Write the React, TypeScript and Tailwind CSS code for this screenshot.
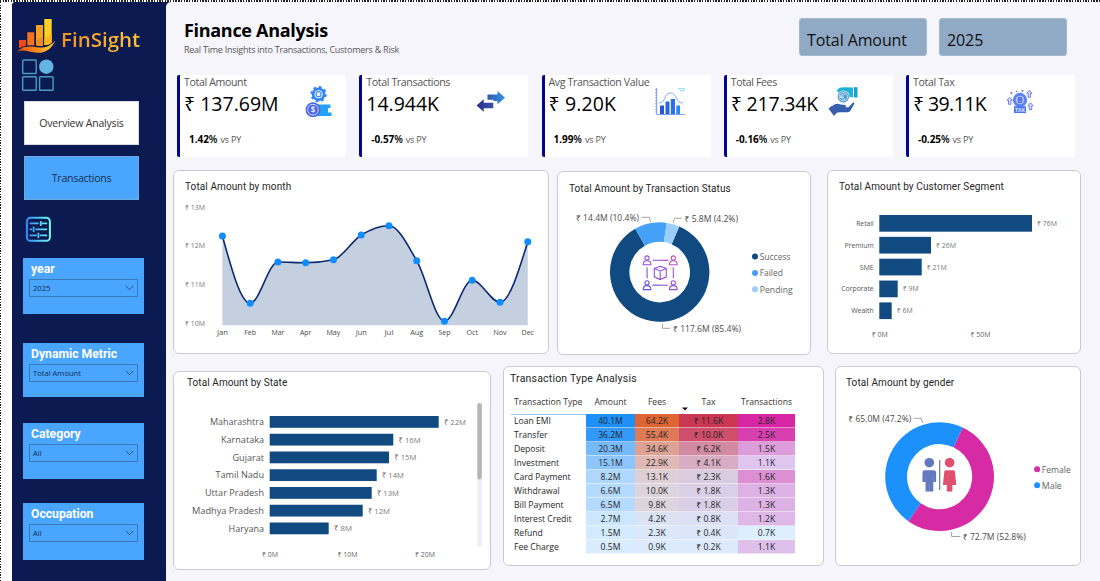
import type { ReactNode } from "react";

const UI = "'Open Sans', 'Noto Sans', sans-serif";

/* ---------- svg text ---------- */
type LabelProps = {
  x: number;
  y: number;
  w: number;
  size: number;
  fill?: string;
  children: string;
};

function Label({ x, y, w, size, fill = "#4a4a4a", children }: LabelProps) {
  return (
    <text
      x={x}
      y={y}
      textLength={w}
      lengthAdjust="spacingAndGlyphs"
      fontSize={size}
      fill={fill}
      fontFamily={UI}
    >
      {children}
    </text>
  );
}

/* ---------- sidebar ---------- */
function Logo() {
  return (
    <svg className="h-[36px] w-[40px] shrink-0" viewBox="16 18 40 36">
      <defs>
        <linearGradient id="lg1" x1="0" x2="1">
          <stop offset="0" stopColor="#f04a12" />
          <stop offset="0.5" stopColor="#f98a1b" />
          <stop offset="1" stopColor="#ffd62e" />
        </linearGradient>
      </defs>
      <rect x="19" y="40" width="7" height="8" fill="#ee4a16" />
      <rect x="27.3" y="32.3" width="7" height="14" fill="#f4731c" />
      <rect x="36" y="25" width="7" height="21" fill="#f9a11f" />
      <rect x="44.3" y="19" width="7.4" height="26" fill="#fdd023" />
      <path d="M44.3 38 L51.7 34 V45 H44.3 Z" fill="#f9b81f" />
      <path d="M36 40 L43 37 V46 H36 Z" fill="#f58c1c" />
      <path
        d="M17 51.5 C24 45.5 31 46 37 47.2 C44 48.4 50 46.5 55 41 C51 50.5 43 53.8 35 52.6 C28 51.5 23 49 17 51.5 Z"
        fill="url(#lg1)"
      />
      <path d="M18 49.6 C25 44.5 32 45.5 38 46.4 C44 47 49 46 54 41.5" fill="none" stroke="#0b1a50" strokeWidth="0.9" />
    </svg>
  );
}

function GridIcon() {
  return (
    <svg className="h-[34px] w-[34px]" viewBox="21 58 34 34" fill="none" stroke="#4a9bc0" strokeWidth="1.4">
      <rect x="22.7" y="60" width="13.5" height="13.5" rx="0.8" />
      <circle cx="46.3" cy="66.7" r="7.2" fill="#62b5e0" stroke="none" />
      <rect x="22.7" y="76.8" width="13.5" height="13.5" rx="0.8" />
      <rect x="39.6" y="76.8" width="13.5" height="13.5" rx="0.8" />
    </svg>
  );
}

function FilterIcon() {
  return (
    <svg className="h-[26px] w-[26px]" viewBox="25 216 26 26" fill="none">
      <defs>
        <linearGradient id="fg" gradientUnits="userSpaceOnUse" x1="26" y1="0" x2="50" y2="0">
          <stop offset="0" stopColor="#2d8cff" />
          <stop offset="1" stopColor="#72fbe8" />
        </linearGradient>
      </defs>
      <g stroke="url(#fg)" strokeWidth="2">
        <rect x="26.9" y="217.8" width="23" height="23" rx="3.6" />
        <path d="M29.5 223.4H38.600 M41.800 223.400H47 M40.800 220.900V226 M29.500 229.400H32 M35.400 229.410H47 M33.600 226.800V232 M29.500 235.400H36.800 M40 235.410H47 M38.400 232.800V238" strokeWidth="1.8" />
      </g>
    </svg>
  );
}

function Slicer({ title, value, className }: { title: string; value: string; className: string }) {
  return (
    <div className={`ml-[11px] w-[121px] bg-[#4aa5ff] pl-[6px] ${className}`}>
      <div className="h-[21px] whitespace-nowrap pl-[2px] pt-[3px] font-['Roboto',sans-serif] text-[12.2px] font-bold leading-[16px] text-white">
        {title}
      </div>
      <div className="flex h-[18px] w-[109px] items-center justify-between border border-[#3a78b8] pl-[3px] pr-[3px]">
        <span className="pt-[2px] font-['Open_Sans','Noto_Sans',sans-serif] text-[7.6px] leading-none text-[#123052]">{value}</span>
        <svg className="h-[6px] w-[9px]" viewBox="0 0 9 6" fill="none" stroke="#1f4c7d" strokeWidth="0.9">
          <path d="M0.7 0.9L4.5 4.7L8.3 0.9" />
        </svg>
      </div>
    </div>
  );
}

function Sidebar() {
  return (
    <aside className="flex w-[154px] shrink-0 flex-col rounded-tl-[4px] bg-[#0b1a50]">
      <div className="flex h-[56px] items-start pl-[4px] pt-[16px]">
        <Logo />
        <span className="ml-[5px] mt-[7px] whitespace-nowrap bg-gradient-to-r from-[#f5931f] to-[#fcc33a] bg-clip-text font-['Open_Sans','Noto_Sans',sans-serif] text-[20.5px] font-semibold leading-[28px] tracking-[0px] text-transparent">
          FinSight
        </span>
      </div>
      <div className="h-[34px] pl-[9px]">
        <GridIcon />
      </div>
      <button className="ml-[12px] mt-[9px] flex h-[44px] w-[115px] items-center justify-center border border-[#d9dbe4] bg-white pt-[2px] font-['Open_Sans','Noto_Sans',sans-serif] text-[10.5px] tracking-[-0.2px] text-[#333]">
        Overview Analysis
      </button>
      <button className="ml-[12px] mt-[11px] flex h-[44px] w-[115px] items-center justify-center border border-[#6fa9dd] bg-[#4aa5ff] pt-[2px] font-['Open_Sans','Noto_Sans',sans-serif] text-[10.5px] tracking-[-0.25px] text-[#14304f]">
        Transactions
      </button>
      <div className="mt-[16px] h-[26px] pl-[13px]">
        <FilterIcon />
      </div>
      <Slicer title="year" value="2025" className="mt-[16px] h-[56px]" />
      <Slicer title="Dynamic Metric" value="Total Amount" className="mt-[28.5px] h-[54px]" />
      <Slicer title="Category" value="All" className="mt-[26px] h-[56px]" />
      <Slicer title="Occupation" value="All" className="mt-[24.5px] h-[57px]" />
    </aside>
  );
}

/* ---------- KPI icons ---------- */
const iconBlue = "#2f86fa";

function GearCoinIcon() {
  return (
    <svg className="h-[34px] w-[30px]" viewBox="304 85 30 34">
      <circle cx="318.6" cy="94.2" r="5.4" fill="none" stroke={iconBlue} strokeWidth="2.800" />
      <circle cx="318.6" cy="94.2" r="7.2" fill="none" stroke={iconBlue} strokeWidth="1.800" strokeDasharray="2.83 2.83" />
      <circle cx="318.6" cy="94.2" r="2.500" fill="none" stroke="#3f8cf8" strokeWidth="1.200" />
      <path d="M317 104.500H330.500V108H328V112.500H331.500V116H317Z" fill="#22a1fb" />
      <circle cx="313" cy="109.700" r="7.400" fill="#4b63e8" />
      <circle cx="313" cy="109.700" r="5.400" fill="none" stroke="#dfe6ff" strokeWidth="0.900" />
      <text x="313" y="112.700" textAnchor="middle" fontSize="8" fontWeight="700" fill="#e6ecff" fontFamily={UI}>
        $
      </text>
    </svg>
  );
}

function ArrowsIcon() {
  return (
    <svg className="h-[22px] w-[30px]" viewBox="476 90 30 22">
      <defs>
        <linearGradient id="ar1" x1="0" x2="1">
          <stop offset="0" stopColor="#3357a8" />
          <stop offset="1" stopColor="#2f93ea" />
        </linearGradient>
        <linearGradient id="ar2" x1="0" x2="1">
          <stop offset="0" stopColor="#23318d" />
          <stop offset="1" stopColor="#3b51ac" />
        </linearGradient>
      </defs>
      <path d="M487.500 94.500H497.500V91L505 97.700L497.500 104.200V101H493.500V99.800H487.500Z" fill="url(#ar1)" />
      <path d="M493.300 102.700H483.700V99.300L476.500 105.500L483.700 111.700V108.300H493.300Z" fill="url(#ar2)" />
    </svg>
  );
}

function HistogramIcon() {
  return (
    <svg className="h-[29px] w-[32px]" viewBox="653 87 32 29">
      <path d="M655.700 88V114.500H684" fill="none" stroke="#5a8cf0" strokeWidth="0.800" />
      <path d="M655 89V114" stroke="#4573e0" strokeWidth="1" strokeDasharray="1.200 1.600" />
      <path d="M658 103C665 103.500 662.500 93 669.500 93S674 103.500 682 103" fill="none" stroke="#6f9cf5" strokeWidth="0.900" />
      <path d="M659 114V105.500H663V114Z" fill="#2456d8" />
      <path d="M664.500 114V101.500H668.500V114Z" fill="#2a62df" />
      <path d="M669.800 114V99H674V114Z" fill="#2a70ea" />
      <path d="M675.300 114V105.500H679V114Z" fill="#2b84f2" />
      <path d="M677 88.700H684M679 90.700H684" stroke="#6fd0f5" strokeWidth="0.800" />
    </svg>
  );
}

function HandsIcon() {
  return (
    <svg className="h-[31px] w-[32px]" viewBox="827 86 32 31">
      <path d="M837 90C839 87.500 842 87 845 87.300L853 87.500V97.200H847C844 97.200 841 95 838 93Z" fill="#1fb2d8" />
      <path d="M854 87.200H857.500V97.500H854Z" fill="#1a9fd0" />
      <circle cx="843.300" cy="96.700" r="6.300" fill="#fff" />
      <circle cx="843.300" cy="96.700" r="5.700" fill="#4a98cc" />
      <circle cx="843.300" cy="96.700" r="4.100" fill="none" stroke="#e6f6ff" strokeWidth="0.800" />
      <path d="M845.300 94.700A2.600 2.600 0 1 0 845.300 98.700M840 96.100H844M840 97.500H844" fill="none" stroke="#f2fbff" strokeWidth="0.700" />
      <path d="M832.500 106C835 103.200 838 103.200 840.500 104.500L845 105C846.500 105.300 846.300 107.300 845 107.300L848.500 107.200L852.800 102.800C853.800 102 854.800 103 854.200 104L850.500 110.500C849.500 112 848 112.300 846.500 112.300H840L836 112.800Z" fill="#345fae" />
      <path d="M828.500 108.500L832.300 105.500L837 112.500L834 116Z" fill="#3c5ca6" />
    </svg>
  );
}

function TaxIcon() {
  return (
    <svg className="h-[27px] w-[28px]" viewBox="1006 88 28 27">
      <circle cx="1020" cy="100" r="7.200" fill="#6487f4" />
      <circle cx="1020" cy="100" r="5" fill="#a9c0fb" stroke="#4c6ff0" strokeWidth="1" />
      <text x="1020" y="102.900" textAnchor="middle" fontSize="8" fontWeight="700" fill="#3f5fe6" fontFamily={UI}>
        B
      </text>
      <rect x="1014" y="106.300" width="12" height="6.700" rx="0.600" fill="#4a74f2" />
      <text x="1020" y="111.700" textAnchor="middle" fontSize="5.200" fontWeight="700" fill="#e4ecff" fontFamily={UI}>
        TAX
      </text>
      <g fill="#dfe6ff" stroke="#6070ee" strokeWidth="0.900">
        <path d="M1009.700 97.300L1012.300 100.300H1010.900V104.300H1008.500V100.300H1007.100Z" />
        <path d="M1029.300 90.300L1031.900 93.300H1030.500V97.300H1028.100V93.300H1026.700Z" />
        <path d="M1030.500 102.800L1033.100 105.800H1031.700V109.600H1029.300V105.800H1027.900Z" />
      </g>
      <g fill="#5f6ff0">
        <circle cx="1011.500" cy="93" r="1" />
        <circle cx="1016.500" cy="91.500" r="0.800" />
        <circle cx="1022.500" cy="91" r="1" />
      </g>
    </svg>
  );
}

function Kpi({
  title,
  value,
  delta,
  valueCls,
  iconCls,
  icon,
}: {
  title: string;
  value: string;
  delta: string;
  valueCls: string;
  iconCls: string;
  icon: ReactNode;
}) {
  return (
    <div className="relative h-[82px] w-[169px] rounded-[2px] border-l-[3px] border-[#04048c] bg-white pl-[4px] font-['Open_Sans','Noto_Sans',sans-serif]">
      <div className="h-[14px] whitespace-nowrap text-[10.6px] leading-[14px] tracking-[-0.36px] text-[#555]">{title}</div>
      <div className={`whitespace-nowrap pt-[3px] text-[19.5px] leading-[24px] text-black ${valueCls}`}>{value}</div>
      <div className="mt-[15px] whitespace-nowrap pl-[5px] text-[9px] leading-[16px] tracking-[-0.2px] text-[#555]">
        <span className="text-[10px] font-bold tracking-[-0.05px] text-black">{delta}</span>
        <span className="mr-px text-[10px] font-semibold text-black">%</span> vs PY
      </div>
      <div className={`absolute ${iconCls}`}>{icon}</div>
    </div>
  );
}

/* ---------- cards ---------- */
function Card({
  title,
  className,
  titleCls,
  children,
}: {
  title: string;
  className: string;
  titleCls: string;
  children: ReactNode;
}) {
  return (
    <section className={`flex shrink-0 flex-col overflow-hidden rounded-[6px] border border-[#cbc9d4] bg-white ${className}`}>
      <h2 className={`whitespace-nowrap font-['Roboto',sans-serif] leading-[14px] text-[#252525] ${titleCls}`}>{title}</h2>
      {children}
    </section>
  );
}

const months = ["Jan", "Feb", "Mar", "Apr", "May", "Jun", "Jul", "Aug", "Sep", "Oct", "Nov", "Dec"];
const monthW = [11, 12, 13, 11.5, 14, 11, 9, 13, 12, 11.5, 13.5, 12.5];
const monthY = [236, 303.3, 262, 262.7, 259.7, 235, 225.7, 260.7, 321.3, 280.3, 302.3, 241.7];
const step = 27.76;
const monthX = monthY.map((_, i) => 222.4 + i * step);

function monotonePath(xs: number[], ys: number[]) {
  const n = xs.length;
  const s = ys.slice(1).map((y, i) => (y - ys[i]) / (xs[i + 1] - xs[i]));
  const m: number[] = new Array(n).fill(0);
  for (let i = 1; i < n - 1; i++) {
    const p = (s[i - 1] + s[i]) / 2;
    m[i] =
      (Math.sign(s[i - 1]) + Math.sign(s[i])) *
      Math.min(Math.abs(s[i - 1]), Math.abs(s[i]), 0.5 * Math.abs(p));
  }
  m[0] = (3 * s[0] - m[1]) / 2;
  m[n - 1] = (3 * s[n - 2] - m[n - 2]) / 2;
  let d = `M${xs[0]},${ys[0]}`;
  for (let i = 0; i < n - 1; i++) {
    const h = (xs[i + 1] - xs[i]) / 3;
    d += `C${xs[i] + h},${ys[i] + m[i] * h} ${xs[i + 1] - h},${ys[i + 1] - m[i + 1] * h} ${xs[i + 1]},${ys[i + 1]}`;
  }
  return d;
}

function MonthChart() {
  const line = monotonePath(monthX, monthY);
  return (
    <svg className="h-[150px] w-[373px]" viewBox="174 200 373 150">
      <path d={`${line}V325.300H${monthX[0]}Z`} fill="#c4d0e0" />
      <path d={line} fill="none" stroke="#0b2a70" strokeWidth="1.600" />
      {monthX.map((x, i) => (
        <circle key={i} cx={x} cy={monthY[i]} r="3.500" fill="#118dff" />
      ))}
      {["₹ 13M", "₹ 12M", "₹ 11M", "₹ 10M"].map((t, i) => (
        <Label key={t} x={185} y={209.8 + i * 38.6} w={20} size={7} fill="#777">
          {t}
        </Label>
      ))}
      {months.map((t, i) => (
        <Label key={t} x={monthX[i] - monthW[i] / 2} y={335.2} w={monthW[i]} size={7}>
          {t}
        </Label>
      ))}
    </svg>
  );
}

function arc(cx: number, cy: number, R: number, r: number, a: number, b: number) {
  const pt = (rad: number, deg: number) => {
    const t = (deg * Math.PI) / 180;
    return `${cx + rad * Math.sin(t)},${cy - rad * Math.cos(t)}`;
  };
  const big = b - a > 180 ? 1 : 0;
  return `M${pt(R, a)}A${R},${R} 0 ${big} 1 ${pt(R, b)}L${pt(r, b)}A${r},${r} 0 ${big} 0 ${pt(r, a)}Z`;
}

function Person({ x, y }: { x: number; y: number }) {
  return (
    <g>
      <circle cx={x} cy={y - 2.3} r="2.1" />
      <path d={`M${x - 3.8} ${y + 4.5}V${y + 3.5}Q${x - 3.5} ${y + 0.5} ${x} ${y + 0.5}T${x + 3.8} ${y + 3.5}V${y + 4.5}Z`} />
    </g>
  );
}

function StatusChart() {
  return (
    <svg className="h-[150px] w-[252px]" viewBox="558 201.2 252 150">
      <defs>
        <linearGradient id="net" gradientUnits="userSpaceOnUse" x1="643" y1="290" x2="678" y2="255">
          <stop offset="0" stopColor="#5a55dd" />
          <stop offset="0.5" stopColor="#9a50d8" />
          <stop offset="1" stopColor="#cf4fc0" />
        </linearGradient>
      </defs>
      <path d={arc(659.7, 272.3, 49.7, 30.3, 23.2, 330.6)} fill="#114a80" />
      <path d={arc(659.7, 272.3, 49.7, 30.3, -29.4, 8)} fill="#45a1f8" />
      <path d={arc(659.7, 272.3, 49.7, 30.3, 8, 23.2)} fill="#9bcefb" />
      <g fill="none" stroke="#999" strokeWidth="0.9">
        <path d="M642 217.500H649.500L650.500 222.500" />
        <path d="M681.500 218.500H674.500L673 223" />
        <path d="M662.500 324V328.500H670" />
      </g>
      <g fill="none" stroke="url(#net)" strokeWidth="1.1">
        <Person x={647} y={260.5} />
        <Person x={673.3} y={260.5} />
        <Person x={647} y={285.3} />
        <Person x={673.3} y={285.3} />
        <path d="M652.500 260.400L668 260.600M652.500 285.300L668 285.500M647 267.500L647.200 278.500M673.200 267.500L673.400 278.500" />
        <path d="M660.200 266.500L666.300 268.700V277L660.200 279.800L654.300 277V268.700ZM654.300 268.700L660.200 271.200L666.300 268.700M660.200 271.200V279.800" />
      </g>
      <Label x={576} y={221} w={63} size={8.6}>₹ 14.4M (10.4%)</Label>
      <Label x={684.5} y={222.3} w={53.5} size={8.6}>₹ 5.8M (4.2%)</Label>
      <Label x={673} y={332.3} w={68} size={8.6}>₹ 117.6M (85.4%)</Label>
      <circle cx="755" cy="256.700" r="3" fill="#114a80" />
      <circle cx="755" cy="273.200" r="3" fill="#45a1f8" />
      <circle cx="755" cy="289.500" r="3" fill="#9bcefb" />
      <Label x={759.7} y={260} w={30.8} size={9} fill="#666">Success</Label>
      <Label x={759.7} y={276.5} w={23.2} size={9} fill="#666">Failed</Label>
      <Label x={759.7} y={292.8} w={33} size={9} fill="#666">Pending</Label>
    </svg>
  );
}

const segments = [
  { n: "Retail", w: 17.5, end: 1032, v: "₹ 76M" },
  { n: "Premium", w: 29, end: 931, v: "₹ 26M" },
  { n: "SME", w: 14, end: 921.7, v: "₹ 21M" },
  { n: "Corporate", w: 32.5, end: 897.7, v: "₹ 9M" },
  { n: "Wealth", w: 22.5, end: 891.7, v: "₹ 6M" },
];

function SegmentChart() {
  return (
    <svg className="h-[150px] w-[252px]" viewBox="828 200 252 150">
      {segments.map((s, i) => {
        const y = 215 + i * 21.85;
        return (
          <g key={s.n}>
            <rect x="879.3" y={y} width={s.end - 879.3} height="16.7" fill="#114a80" />
            <Label x={873.7 - s.w} y={y + 10.8} w={s.w} size={7} fill="#555">{s.n}</Label>
            <Label x={s.end + 5} y={y + 10.8} w={i < 3 ? 20 : 16} size={7} fill="#777">{s.v}</Label>
          </g>
        );
      })}
      <Label x={871.8} y={337.2} w={16} size={7} fill="#666">₹ 0M</Label>
      <Label x={970.5} y={337.2} w={20} size={7} fill="#666">₹ 50M</Label>
    </svg>
  );
}

const states = [
  { n: "Maharashtra", w: 54, end: 438.7, v: "₹ 22M" },
  { n: "Karnataka", w: 43, end: 393.3, v: "₹ 16M" },
  { n: "Gujarat", w: 31.5, end: 389, v: "₹ 15M" },
  { n: "Tamil Nadu", w: 48.5, end: 376.7, v: "₹ 14M" },
  { n: "Uttar Pradesh", w: 59, end: 371.7, v: "₹ 13M" },
  { n: "Madhya Pradesh", w: 72, end: 362.7, v: "₹ 12M" },
  { n: "Haryana", w: 35.5, end: 328.7, v: "₹ 8M" },
];

function StateChart() {
  return (
    <svg className="h-[166px] w-[315px]" viewBox="174 398 315 166">
      {states.map((s, i) => {
        const y = 416 + i * 17.75;
        return (
          <g key={s.n}>
            <rect x="269.7" y={y} width={s.end - 269.7} height="11.8" fill="#114a80" />
            <Label x={264 - s.w} y={y + 9.2} w={s.w} size={9.4} fill="#555">{s.n}</Label>
            <Label x={s.end + 5.3} y={y + 8.8} w={i < 6 ? 22 : 18} size={7.8} fill="#777">{s.v}</Label>
          </g>
        );
      })}
      <rect x="477.3" y="403" width="4.5" height="144" rx="2" fill="#efeff1" />
      <rect x="477.3" y="403" width="4.5" height="76.5" rx="2.2" fill="#b5b5b8" />
      <Label x={262} y={557} w={16} size={7} fill="#666">₹ 0M</Label>
      <Label x={337.5} y={557} w={20} size={7} fill="#666">₹ 10M</Label>
      <Label x={415} y={557} w={20} size={7} fill="#666">₹ 20M</Label>
    </svg>
  );
}

const rows: string[][] = [
  ["Loan EMI", "40.1M", "64.2K", "₹ 11.6K", "2.8K"],
  ["Transfer", "36.2M", "55.4K", "₹ 10.0K", "2.5K"],
  ["Deposit", "20.3M", "34.6K", "₹ 6.2K", "1.5K"],
  ["Investment", "15.1M", "22.9K", "₹ 4.1K", "1.1K"],
  ["Card Payment", "8.2M", "13.1K", "₹ 2.3K", "1.6K"],
  ["Withdrawal", "6.6M", "10.0K", "₹ 1.8K", "1.3K"],
  ["Bill Payment", "6.5M", "9.8K", "₹ 1.8K", "1.3K"],
  ["Interest Credit", "2.7M", "4.2K", "₹ 0.8K", "1.2K"],
  ["Refund", "1.5M", "2.3K", "₹ 0.4K", "0.7K"],
  ["Fee Charge", "0.5M", "0.9K", "₹ 0.2K", "1.1K"],
];
const heat: string[][] = [
  ["bg-[#1e90fc]", "bg-[#df6534]", "bg-[#cb3653]", "bg-[#d626a3]"],
  ["bg-[#3399fb]", "bg-[#de7a57]", "bg-[#cf4e6b]", "bg-[#d840b0]"],
  ["bg-[#77bafc]", "bg-[#dda294]", "bg-[#d28aa3]", "bg-[#dd9cda]"],
  ["bg-[#8cc6fd]", "bg-[#dfb9b5]", "bg-[#d7adc3]", "bg-[#dec6ef]"],
  ["bg-[#b0d8ff]", "bg-[#decfd6]", "bg-[#d9cce0]", "bg-[#dd8fd4]"],
  ["bg-[#b5daff]", "bg-[#ded4dd]", "bg-[#dacfe6]", "bg-[#ddb3e5]"],
  ["bg-[#b5daff]", "bg-[#ded4dd]", "bg-[#dacfe6]", "bg-[#ddb3e5]"],
  ["bg-[#cde6ff]", "bg-[#dbe2f2]", "bg-[#dbe0f5]", "bg-[#deb9e8]"],
  ["bg-[#d4eaff]", "bg-[#dbe7fa]", "bg-[#dce6fb]", "bg-[#dceeff]"],
  ["bg-[#d9ecff]", "bg-[#dceafd]", "bg-[#dceafe]", "bg-[#dec0eb]"],
];

function TypeTable() {
  return (
    <div className="ml-[7px] mt-[6px] w-[285px] font-['Open_Sans','Noto_Sans',sans-serif]">
      <div className="grid h-[21.5px] grid-cols-[75px_49px_44px_59px_57px] items-center text-center text-[8.6px] text-[#333]">
        <span className="whitespace-nowrap pl-[3px] text-left">Transaction Type</span>
        <span>Amount</span>
        <span>Fees</span>
        <span className="relative">
          Tax
          <svg className="absolute left-[3px] top-[11px] h-[4px] w-[6px]" viewBox="0 0 6 4">
            <path d="M0 0.500H6L3 3.500Z" fill="#111" />
          </svg>
        </span>
        <span>Transactions</span>
      </div>
      {rows.map((r, i) => (
        <div
          key={r[0]}
          className="grid h-[14.1px] grid-cols-[75px_49px_44px_59px_57px] text-center text-[8.6px] leading-[15px] text-[#262626]"
        >
          <span className={`whitespace-nowrap pl-[3px] text-left ${i === 0 ? "border-t border-[#8fc7f5] leading-[13px]" : ""}`}>{r[0]}</span>
          {r.slice(1).map((c, j) => (
            <span key={j} className={`h-[14.1px] border-b border-white/50 ${heat[i][j]}`}>{c}</span>
          ))}
        </div>
      ))}
    </div>
  );
}

function GenderChart() {
  return (
    <svg className="h-[164px] w-[244px]" viewBox="835.7 396 244 164">
      <path d={arc(939.3, 476.7, 54.4, 32.6, 25.1, 215.2)} fill="#d62ba5" />
      <path d={arc(939.3, 476.7, 54.4, 32.6, 215.2, 385.1)} fill="#1c90fb" />
      <g fill="none" stroke="#999" strokeWidth="0.9">
        <path d="M913.500 418.300H921L922.500 423" />
        <path d="M951.300 532V536.500H960" />
      </g>
      <circle cx="929" cy="462.700" r="4.800" fill="#6478c0" />
      <path d="M924.500 470.300H933.500Q935.800 470.300 935.800 472.500V482H933V491.500H925.200V482H922.200V472.500Q922.200 470.300 924.500 470.300Z" fill="#6478c0" />
      <path d="M925.600 475V482M932.800 475V482M929 484V491.500" stroke="#8a99d4" strokeWidth="0.5" />
      <path d="M939.400 460V490" stroke="#5c7a94" strokeWidth="1.200" />
      <circle cx="949.300" cy="462.700" r="4.800" fill="#e0506e" />
      <path d="M945.500 470.300H953Q954.300 470.300 954.600 471.600L956 485H952V491.500H946.500V485H942.600L944 471.600Q944.300 470.300 945.500 470.300Z" fill="#e0506e" />
      <Label x={848} y={422.3} w={63} size={8.6}>₹ 65.0M (47.2%)</Label>
      <Label x={962.5} y={540.3} w={63} size={8.6}>₹ 72.7M (52.8%)</Label>
      <circle cx="1036.800" cy="469.200" r="3" fill="#d62ba5" />
      <circle cx="1036.800" cy="485.300" r="3" fill="#1c90fb" />
      <Label x={1041.5} y={472.5} w={29} size={9} fill="#666">Female</Label>
      <Label x={1041.5} y={488.7} w={20} size={9} fill="#666">Male</Label>
    </svg>
  );
}

/* ---------- page ---------- */
export default function App() {
  return (
    <div className="flex h-[581px] w-[1100px] flex-col overflow-hidden bg-white">
      <div className="h-[2px] shrink-0 bg-[repeating-linear-gradient(90deg,#222_0px,#222_1.35px,#fff_1.35px,#fff_2.7px)]" />
      <div className="flex flex-1">
        <div className="w-[12px] shrink-0 bg-white">
          <div className="h-full w-[1px] bg-[repeating-linear-gradient(180deg,#222_0px,#222_1.35px,#fff_1.35px,#fff_2.7px)]" />
        </div>
        <div className="flex flex-1 rounded-tl-[4px] bg-[#0b1a50]">
          <Sidebar />
          <main className="flex flex-1 flex-col rounded-tl-[5px] bg-[#f6f5fc]">
            <header className="flex h-[73px] shrink-0 items-start pl-[18px] font-['Open_Sans','Noto_Sans',sans-serif]">
              <div className="w-[615px] pt-[16px]">
                <h1 className="text-[18px] font-bold leading-[24px] tracking-[-0.3px] text-black">Finance Analysis</h1>
                <p className="mt-px text-[9px] leading-[13px] tracking-[-0.25px] text-[#555]">
                  Real Time Insights into Transactions, Customers &amp; Risk
                </p>
              </div>
              <div className="mt-[16px] flex h-[38px] w-[128px] items-center whitespace-nowrap rounded-[3px] border border-[#a4b8ce] bg-[#90a9c5] pl-[7px] pt-[5px] text-[16px] tracking-[-0.1px] text-[#111]">
                Total Amount
              </div>
              <div className="ml-[12px] mt-[16px] flex h-[38px] w-[128px] items-center rounded-[3px] border border-[#a4b8ce] bg-[#90a9c5] pl-[7px] pt-[5px] text-[16px] tracking-[-0.1px] text-[#111]">
                2025
              </div>
            </header>

            <div className="ml-[11px] flex w-[898px] justify-between">
              <Kpi title="Total Amount" value="₹ 137.69M" delta="1.42" valueCls="" iconCls="left-[124px] top-[10px]" icon={<GearCoinIcon />} />
              <Kpi title="Total Transactions" value="14.944K" delta="-0.57" valueCls="" iconCls="left-[114px] top-[15px]" icon={<ArrowsIcon />} />
              <Kpi title="Avg Transaction Value" value="₹ 9.20K" delta="1.99" valueCls="tracking-[0.1px]" iconCls="left-[109px] top-[12px]" icon={<HistogramIcon />} />
              <Kpi title="Total Fees" value="₹ 217.34K" delta="-0.16" valueCls="tracking-[-0.2px]" iconCls="left-[100px] top-[11px]" icon={<HandsIcon />} />
              <Kpi title="Total Tax" value="₹ 39.11K" delta="-0.25" valueCls="tracking-[-0.6px]" iconCls="left-[97px] top-[13px]" icon={<TaxIcon />} />
            </div>

            <div className="ml-[7px] mt-[13px] flex items-start">
              <Card title="Total Amount by month" className="h-[184px] w-[376px]" titleCls="pl-[11px] pt-[9px] pb-[6px] text-[10px] tracking-[0.1px]">
                <MonthChart />
              </Card>
              <Card title="Total Amount by Transaction Status" className="ml-[8px] mt-px h-[184px] w-[254px]" titleCls="pl-[11px] pt-[10px] pb-[5px] text-[10px] tracking-[0.09px]">
                <StatusChart />
              </Card>
              <Card title="Total Amount by Customer Segment" className="ml-[16px] h-[184px] w-[254px]" titleCls="pl-[11px] pt-[9px] pb-[6px] text-[10px] tracking-[0.12px]">
                <SegmentChart />
              </Card>
            </div>

            <div className="ml-[7px] mt-[11px] flex items-start">
              <Card title="Total Amount by State" className="mt-[5px] h-[199px] w-[318px]" titleCls="pl-[13px] pt-[4px] pb-[8px] text-[10px] tracking-[0.08px]">
                <StateChart />
              </Card>
              <Card title="Transaction Type Analysis" className="ml-[12px] h-[200px] w-[321px]" titleCls="pl-[6px] pt-[5px] text-[10.5px] tracking-[0.2px]">
                <TypeTable />
              </Card>
              <Card title="Total Amount by gender" className="ml-[11px] h-[200px] w-[246px]" titleCls="pl-[10px] pt-[9px] pb-[6px] text-[10px] tracking-[0.1px]">
                <GenderChart />
              </Card>
            </div>
          </main>
        </div>
      </div>
    </div>
  );
}
